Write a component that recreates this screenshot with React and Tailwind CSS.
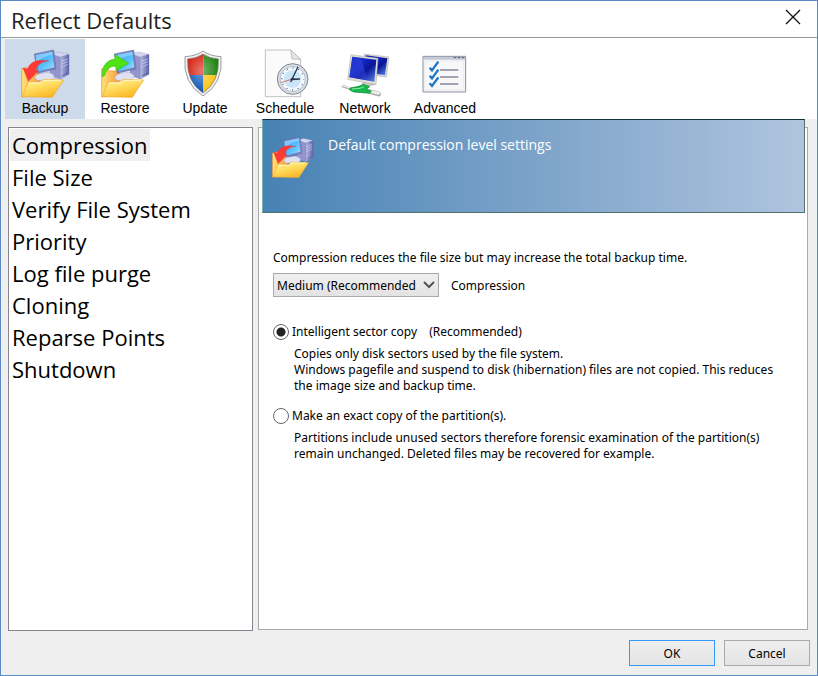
import { useState } from "react";

function ComputerFolder({ children }) {
  return (
    <>
      <defs>
        <linearGradient id="folderFront" x1="0" y1="0" x2="0.6" y2="1">
          <stop offset="0" stopColor="#fff0a0" />
          <stop offset="0.45" stopColor="#ffe066" />
          <stop offset="1" stopColor="#fbb624" />
        </linearGradient>
        <linearGradient id="folderBack" x1="0" y1="0" x2="1" y2="0">
          <stop offset="0" stopColor="#ffe27a" />
          <stop offset="1" stopColor="#f79a3c" />
        </linearGradient>
        <linearGradient id="screen" x1="0" y1="0" x2="1" y2="1">
          <stop offset="0" stopColor="#2f9df0" />
          <stop offset="0.6" stopColor="#5cc2ff" />
          <stop offset="1" stopColor="#9fe2ff" />
        </linearGradient>
        <linearGradient id="tower" x1="0" y1="0" x2="1" y2="0">
          <stop offset="0" stopColor="#b9bce6" />
          <stop offset="1" stopColor="#5d61a8" />
        </linearGradient>
      </defs>
      <path d="M65 206l16-3 8 10h30v30l-40 46-14 2z" fill="url(#folderBack)" stroke="#ee8a2a" strokeWidth="2" />
      <path d="M150 161l25-5 32 7-26 9z" fill="#d4d6f1" stroke="#8e91c2" strokeWidth="1" />
      <path d="M150 161l31 11v65l-31-10z" fill="#9296cc" stroke="#7a7eb6" strokeWidth="1" />
      <path d="M181 172l26-9v60l-26 14z" fill="url(#tower)" stroke="#6c70ae" strokeWidth="1" />
      <path d="M184 184l19-7M184 193l19-8M184 202l19-9" stroke="#c6c8ec" strokeWidth="2.5" />
      <path d="M186 228l16-9" stroke="#3f4485" strokeWidth="2" />
      <path d="M104 234q2-11 20-14l22-3q17 5 17 15l-8 9h-43z" fill="#dfe1f3" stroke="#a5a8d0" strokeWidth="1.5" />
      <path d="M103 162l58-12 7 57-56 13z" fill="#7a7fbd" stroke="#6267a6" strokeWidth="1.5" />
      <path d="M107 165l50-10 6 47-47 12z" fill="url(#screen)" />
      <path d="M107 165l50-10 1 9q-30 4-49 25z" fill="#a8dcff" opacity="0.6" />
      <path d="M66 290l19-44h36l10-8 60 2-34 52z" fill="url(#folderFront)" stroke="#f0a92c" strokeWidth="2" />
      <path d="M87 249h36l10-8h50" fill="none" stroke="#fff8d0" strokeWidth="3" />
      {children}
    </>
  );
}

function BackupIcon({ className }) {
  return (
    <svg viewBox="60 147 150 150" className={className} aria-hidden="true">
      <ComputerFolder>
        <path d="M147 183q-17 0-28 9-9 7-12 16l7 5-29 31-16-40 13 3q8-18 24-23 17-6 41-1z" fill="#ff3a36" stroke="#e02a28" strokeWidth="1" />
      </ComputerFolder>
    </svg>
  );
}

function RestoreIcon({ className }) {
  return (
    <svg viewBox="60 147 150 150" className={className} aria-hidden="true">
      <ComputerFolder>
        <path d="M67 231q-2-27 10-40 11-13 29-14l-2-14 42 27-38 22-1-14q-14 0-22 8-7 7-11 20z" fill="#4fe314" stroke="#2fae0a" strokeWidth="1.5" />
      </ComputerFolder>
    </svg>
  );
}

function UpdateIcon({ className }) {
  return (
    <svg viewBox="540 147 150 150" className={className} aria-hidden="true">
      <defs>
        <clipPath id="shieldClip">
          <path d="M609 162q18 13 46 15 4 68-46 102-50-34-46-102 28-2 46-15z" />
        </clipPath>
        <radialGradient id="shieldShine" cx="0.45" cy="0.45" r="0.45">
          <stop offset="0" stopColor="#fff" stopOpacity="0.4" />
          <stop offset="1" stopColor="#fff" stopOpacity="0" />
        </radialGradient>
      </defs>
      <path d="M609 153q21 15 54 17 8 79-54 118-62-39-54-118 33-2 54-17z" fill="#f1f1f1" stroke="#8a8a8a" strokeWidth="2.5" />
      <g clipPath="url(#shieldClip)">
        <path d="M555 150h55v75h-55z" fill="#d81d0c" />
        <path d="M610 150h55v75h-55z" fill="#218512" />
        <path d="M555 225h55v65h-55z" fill="#0f58b8" />
        <path d="M610 225h55v65h-55z" fill="#fcc212" />
        <path d="M555 150h110v140h-110z" fill="url(#shieldShine)" />
      </g>
      <path d="M609 162q18 13 46 15 4 68-46 102-50-34-46-102 28-2 46-15z" fill="none" stroke="#6d6d6d" strokeWidth="2" />
    </svg>
  );
}

function ScheduleIcon({ className }) {
  return (
    <svg viewBox="60 27 150 150" className={className} aria-hidden="true">
      <path d="M76 30h76l30 28v112h-106z" fill="#fbfbfb" stroke="#b4b4b4" strokeWidth="2.5" />
      <path d="M152 30l4 27 26 1z" fill="#e6e6e6" stroke="#a9a9a9" strokeWidth="2" />
      <circle cx="158" cy="117" r="46" fill="#dcdfe3" stroke="#80868e" strokeWidth="3" />
      <circle cx="158" cy="117" r="38" fill="#f1f8fe" stroke="#9aa7b5" strokeWidth="2" />
      <circle cx="158" cy="117" r="26" fill="#cbe4f8" />
      <circle cx="158" cy="117" r="33" fill="none" stroke="#47719c" strokeWidth="4" strokeDasharray="3 14.28" strokeDashoffset="1.5" />
      <path d="M158 117l-36 11" stroke="#cf5c4a" strokeWidth="2.5" />
      <path d="M152 126l22-46" stroke="#24384a" strokeWidth="4" />
      <path d="M152 118l28-1" stroke="#24384a" strokeWidth="5" />
      <circle cx="158" cy="117" r="4" fill="#24384a" />
    </svg>
  );
}

function NetworkIcon({ className }) {
  return (
    <svg viewBox="300 27 150 150" className={className} aria-hidden="true">
      <defs>
        <linearGradient id="netScreen" x1="0" y1="0" x2="1" y2="1">
          <stop offset="0" stopColor="#0a17a8" />
          <stop offset="0.35" stopColor="#1527c8" />
          <stop offset="0.6" stopColor="#0b1596" />
          <stop offset="1" stopColor="#5f8cf0" />
        </linearGradient>
      </defs>
      <path d="M373 42l74 9-8 60-62-7z" fill="#d9d9d6" stroke="#aaa9a5" strokeWidth="1.5" />
      <path d="M377 46l65 9-7 50-56-6z" fill="url(#netScreen)" />
      <path d="M372 124l14 2 18 8-24 4-14-7z" fill="#c9c9c6" stroke="#96968f" strokeWidth="1.5" />
      <path d="M333 44l81 11-6 79-85-16z" fill="#e0dfdb" stroke="#a5a49e" strokeWidth="1.5" />
      <path d="M337 50l72 9-6 66-75-13z" fill="url(#netScreen)" />
      <path d="M337 50l28 4q5 30 19 67l-56-9z" fill="#3147dc" opacity="0.55" />
      <path d="M306 137l28 10" stroke="#a7a7a7" strokeWidth="8" />
      <path d="M306 136l28 9" stroke="#f1f1f1" strokeWidth="4" />
      <path d="M392 155l24 7" stroke="#a7a7a7" strokeWidth="14" strokeLinecap="round" />
      <path d="M392 154l24 6" stroke="#ededed" strokeWidth="9" strokeLinecap="round" />
      <path d="M330 144l26-5 14-6 19 7-9 7 14 6-5 7-48-4-12-6z" fill="#15b84b" stroke="#0a8732" strokeWidth="2" />
      <path d="M336 147l24-2 12-5" stroke="#83efa6" strokeWidth="3" fill="none" />
    </svg>
  );
}

function AdvancedIcon({ className }) {
  return (
    <svg viewBox="540 27 150 150" className={className} aria-hidden="true">
      <path d="M549 49h128v107h-128z" fill="#f5f6f8" stroke="#8a90a0" strokeWidth="3" />
      <path d="M551 51h124v8h-124z" fill="#c4cad6" />
      <path d="M641 53h8M653 53h8M665 53h8" stroke="#565f72" strokeWidth="3" />
      <path d="M555 63h116v87h-116z" fill="#f8f8fa" stroke="#dcdfe6" strokeWidth="1.5" />
      <path d="M600 90h55M600 111h55M600 132h55" stroke="#85879f" strokeWidth="5" />
      <path d="M569 83l7 8 19-26M569 107l7 8 19-26M569 130l7 8 19-26" fill="none" stroke="#1d76c4" strokeWidth="7" />
    </svg>
  );
}

const TOOLS = [
  ["Backup", BackupIcon],
  ["Restore", RestoreIcon],
  ["Update", UpdateIcon],
  ["Schedule", ScheduleIcon],
  ["Network", NetworkIcon],
  ["Advanced", AdvancedIcon],
];

const SECTIONS = [
  "Compression",
  "File Size",
  "Verify File System",
  "Priority",
  "Log file purge",
  "Cloning",
  "Reparse Points",
  "Shutdown",
];

const RADIO =
  "size-4 shrink-0 appearance-none rounded-full border border-[#666] bg-white checked:bg-[radial-gradient(circle,#222_0_4px,#fff_5px)]";

export default function App() {
  const [tool, setTool] = useState("Backup");
  const [section, setSection] = useState("Compression");
  const [mode, setMode] = useState("smart");

  return (
    <div className="flex min-h-screen flex-col border border-[#5b8ac6] bg-[#efefef] font-['Noto_Sans',sans-serif] text-xs text-black">
      <header className="flex h-[37px] items-center justify-between border-b border-[#999] bg-white pr-4 pl-[10px]">
        <h1 className="pt-px font-['Open_Sans',sans-serif] text-[22px] leading-8 text-[#222]">Reflect Defaults</h1>
        <button type="button" aria-label="Close" className="mb-1">
          <svg viewBox="0 0 16 16" className="size-4" aria-hidden="true">
            <path d="M1 1l14 14M15 1L1 15" stroke="#111" strokeWidth="1.3" />
          </svg>
        </button>
      </header>

      <nav className="ml-1 flex bg-white pt-px font-['Liberation_Sans',Arial,sans-serif] text-sm leading-4">
        {TOOLS.map(([name, Icon]) => (
          <button
            key={name}
            type="button"
            onClick={() => setTool(name)}
            className={`flex h-20 w-20 flex-col items-center pt-[10px] ${tool === name ? "bg-[#cddaea]" : ""}`}
          >
            <Icon className="size-[50px]" />
            <span className="mt-px">{name}</span>
          </button>
        ))}
      </nav>

      <main className="flex flex-1 gap-[5px] pt-2 pr-[9px] pl-[7px]">
        <ul className="w-[245px] shrink-0 border border-[#828790] bg-white px-px pt-px font-['Open_Sans',sans-serif] text-[22px] leading-8">
          {SECTIONS.map((name) => (
            <li key={name}>
              <button
                type="button"
                onClick={() => setSection(name)}
                className={`px-[2px] ${section === name ? "bg-[#efefef]" : ""}`}
              >
                {name}
              </button>
            </li>
          ))}
        </ul>

        <section className="mb-px flex-1 border border-[#aaa] bg-white">
          <div className="-mt-[9px] mr-[2px] ml-[3px] flex h-[94px] gap-[14px] border border-t-[#12303c] border-r-[#4f7470] border-b-[#4f7470] border-l-[#73b5ae] bg-linear-to-r from-[#4682b4] to-[#b0c4de] px-2 pt-4">
            <BackupIcon className="size-[43px]" />
            <h2 className="font-['Open_Sans',sans-serif] text-sm leading-[18px] text-white">Default compression level settings</h2>
          </div>

          <div className="pt-[37px] pr-4 pl-[14px] leading-4">
            <p>Compression reduces the file size but may increase the total backup time.</p>
            <div className="mt-[7px] flex items-center gap-3">
              <div className="relative">
                <select
                  id="level"
                  className="block h-6 w-[166px] appearance-none border border-[#aaa] bg-linear-to-b from-[#efefef] to-[#e3e3e3] pt-px pl-[3px]"
                >
                  <option>Medium (Recommended</option>
                </select>
                <svg viewBox="0 0 12 8" className="pointer-events-none absolute top-2 right-1 h-2 w-3" aria-hidden="true">
                  <path d="M1 1l5 5 5-5" fill="none" stroke="#555" strokeWidth="2" />
                </svg>
              </div>
              <label htmlFor="level" className="pt-px">Compression</label>
            </div>

            <div className="mt-[26px] flex items-center gap-[3px]">
              <input id="smart" type="radio" name="mode" className={RADIO} checked={mode === "smart"} onChange={() => setMode("smart")} />
              <label htmlFor="smart" className="flex gap-3 pt-px">
                <span>Intelligent sector copy</span>
                <span>(Recommended)</span>
              </label>
            </div>
            <p className="mt-[6px] pl-[21px]">
              Copies only disk sectors used by the file system.
              <br />
              Windows pagefile and suspend to disk (hibernation) files are not copied. This reduces the image size and backup time.
            </p>

            <div className="mt-[13px] flex items-center gap-[3px]">
              <input id="exact" type="radio" name="mode" className={RADIO} checked={mode === "exact"} onChange={() => setMode("exact")} />
              <label htmlFor="exact" className="pt-px">Make an exact copy of the partition(s).</label>
            </div>
            <p className="mt-[6px] pl-[21px]">
              Partitions include unused sectors therefore forensic examination of the partition(s) remain unchanged. Deleted files may be recovered for example.
            </p>
          </div>
        </section>
      </main>

      <footer className="flex justify-end gap-[9px] pt-[9px] pr-[7px] pb-[9px]">
        <button type="button" className="h-[26px] w-[86px] border border-[#3399ff] bg-linear-to-b from-[#efefef] to-[#e4e4e4] pt-px">
          OK
        </button>
        <button type="button" className="h-[26px] w-[86px] border border-[#aaa] bg-linear-to-b from-[#efefef] to-[#e4e4e4] pt-px">
          Cancel
        </button>
      </footer>
    </div>
  );
}
